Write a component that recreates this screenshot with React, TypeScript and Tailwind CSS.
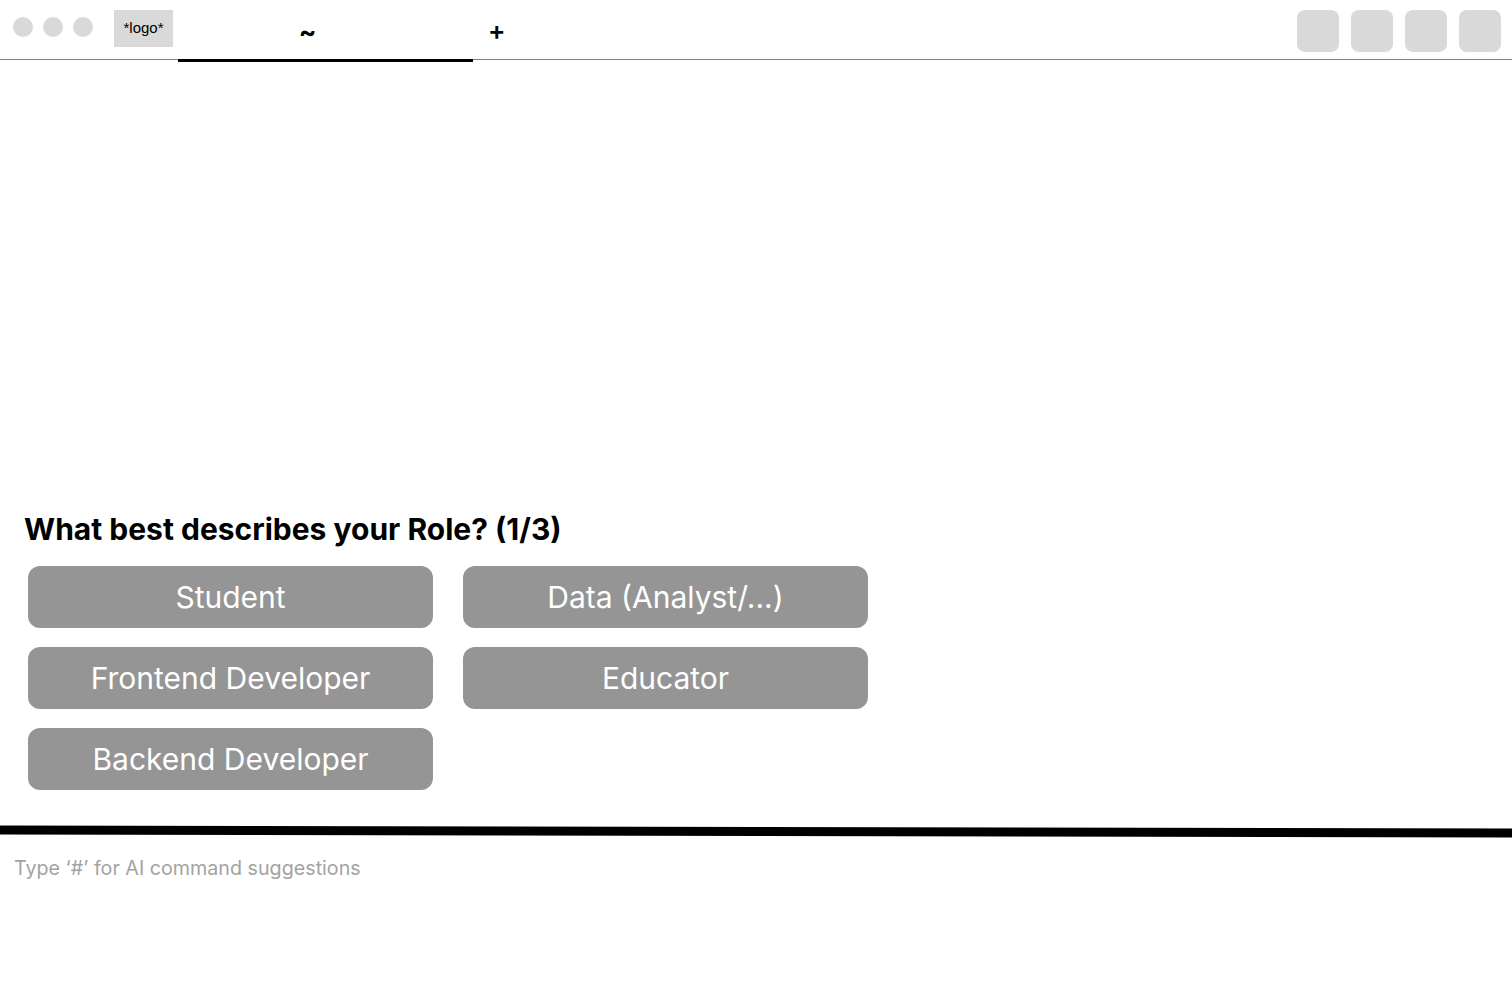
const roles = [
  "Student",
  "Data (Analyst/...)",
  "Frontend Developer",
  "Educator",
  "Backend Developer",
];

function TopBar() {
  return (
    <div className="relative flex h-[60px] w-full shrink-0 items-start border-b border-[#808080] bg-white pl-[13px] pr-[11px]">
      {/* window dots */}
      <div className="mt-[17px] flex gap-[10px]">
        <div className="size-[20px] rounded-full bg-[#d9d9d9]" />
        <div className="size-[20px] rounded-full bg-[#d9d9d9]" />
        <div className="size-[20px] rounded-full bg-[#d9d9d9]" />
      </div>
      <div className="ml-[21px] mt-[10px] flex h-[37px] w-[59px] items-center justify-center bg-[#d9d9d9] font-['Liberation_Sans',sans-serif] text-[15px] text-black">
        *logo*
      </div>
      {/* active tab */}
      <div className="relative ml-[5px] flex h-[59px] w-[295px] items-center justify-center pr-[36px] pt-[4px]">
        <span className="font-['Inter',sans-serif] text-[26px] font-bold leading-none text-black">~</span>
        <div className="absolute bottom-[-3px] left-0 h-[3px] w-full bg-black" />
      </div>
      <div className="ml-[15px] flex h-[59px] items-center pt-[2px]">
        <span className="font-['Inter',sans-serif] text-[26px] font-semibold leading-none text-black">+</span>
      </div>
      <div className="ml-auto mt-[10px] flex gap-[12px]">
        <div className="size-[42px] rounded-[8px] bg-[#d9d9d9]" />
        <div className="size-[42px] rounded-[8px] bg-[#d9d9d9]" />
        <div className="size-[42px] rounded-[8px] bg-[#d9d9d9]" />
        <div className="size-[42px] rounded-[8px] bg-[#d9d9d9]" />
      </div>
    </div>
  );
}

export default function App() {
  return (
    <div className="flex h-[982px] w-[1512px] flex-col overflow-hidden bg-white font-['Inter',sans-serif]">
      <TopBar />

      {/* Conversation area */}
      <div className="flex flex-1 flex-col justify-end pb-[37px] pl-[24px]">
        <p className="text-[30px] font-bold leading-[34px] text-black">What best describes your Role? (1/3)</p>
        <div className="ml-[4px] mt-[20px] grid grid-cols-[405px_405px] gap-x-[30px] gap-y-[19px]">
          {roles.map((r) => (
            <button
              key={r}
              className="flex h-[62px] items-center justify-center rounded-[12px] bg-[#959595] pt-[1px] text-[30px] font-normal text-white"
            >
              {r}
            </button>
          ))}
        </div>
      </div>

      <div className="h-[9px] w-full shrink-0 rotate-[0.11deg] bg-black" />

      {/* Input */}
      <div className="h-[146px] shrink-0 pl-[14px] pt-[20px]">
        <p className="text-[19.7px] leading-[24px] text-[#a3a3a3]">Type ‘#’ for AI command suggestions</p>
      </div>
    </div>
  );
}
